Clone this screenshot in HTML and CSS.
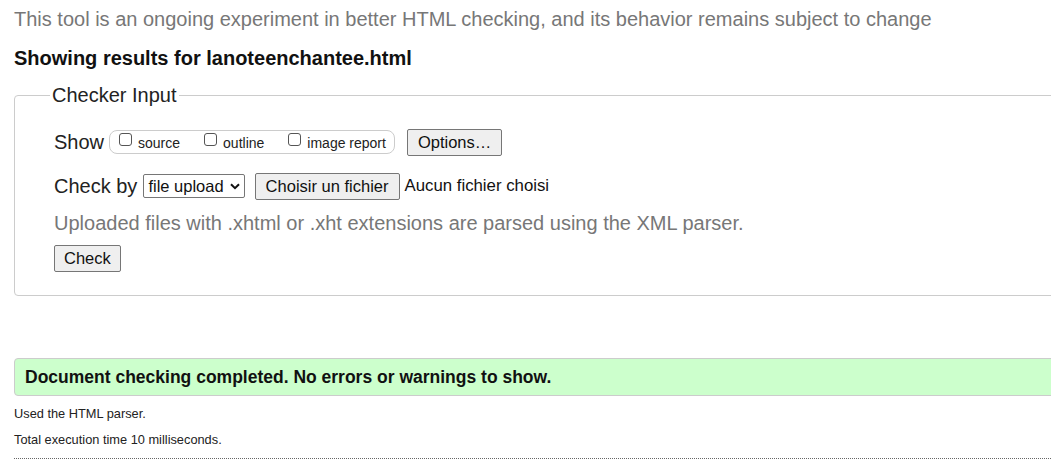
FILE: index.html
```html
<!DOCTYPE html>
<html>
<head>
<meta charset="utf-8">
<link rel="stylesheet" href="styles.css">
</head>
<body>
<p class="intro">This tool is an ongoing experiment in better HTML checking, and its behavior remains subject to change</p>
<h2 class="showing">Showing results for lanoteenchantee.html</h2>
<fieldset class="checker">
  <legend class="legend">Checker Input</legend>
  <div class="row row-show">
    <span class="label">Show</span>
    <span class="show-group">
      <label class="opt"><span class="cb"></span>source</label>
      <label class="opt"><span class="cb"></span>outline</label>
      <label class="opt"><span class="cb"></span>image report</label>
    </span>
    <button class="btn btn-options">Options…</button>
  </div>
  <div class="row row-check">
    <span class="label">Check by</span>
    <span class="select">file upload<svg class="chev" width="10" height="7" viewBox="0 0 10 7"><path d="M1 1.2 L5 5.2 L9 1.2" fill="none" stroke="#111" stroke-width="2"/></svg></span>
    <button class="btn btn-file">Choisir un fichier</button>
    <span class="nofile">Aucun fichier choisi</span>
  </div>
  <p class="hint">Uploaded files with .xhtml or .xht extensions are parsed using the XML parser.</p>
  <button class="btn btn-check">Check</button>
</fieldset>
<div class="success">Document checking completed. No errors or warnings to show.</div>
<p class="meta">Used the HTML parser.</p>
<p class="meta">Total execution time 10 milliseconds.</p>
<div class="dotted"></div>
</body>
</html>
```
FILE: styles.css
```css
html {
  overflow: hidden;
}
body {
  margin: 0;
  padding: 0 0 0 14px;
  font-family: "Liberation Sans", Arial, sans-serif;
  color: #222;
  background: #fff;
}
.intro {
  margin: 8px 0 0;
  font-size: 20px;
  line-height: 22px;
  color: #777;
}
.showing {
  margin: 17px 0 0;
  font-size: 20px;
  line-height: 22px;
  font-weight: bold;
  color: #111;
}
.checker {
  margin: 15px -40px 0 0;
  padding: 22px 0 23px 39px;
  border: 1px solid #ccc;
  border-radius: 4px;
  min-width: 0;
}
.legend {
  margin-left: -4px;
  padding: 0 2px;
  font-size: 20px;
  line-height: 22px;
  color: #222;
}
.row {
  display: flex;
  align-items: center;
}
.label {
  font-size: 20px;
  color: #222;
}
.row-show {
  height: 28px;
}
.show-group {
  display: flex;
  align-items: center;
  margin-left: 5px;
  height: 22px;
  padding: 0 8px 0 9px;
  border: 1px solid #ccc;
  border-radius: 8px;
  gap: 24px;
}
.opt {
  display: flex;
  align-items: center;
  font-size: 14px;
  color: #222;
  padding-top: 2px;
}
.cb {
  width: 11px;
  height: 11px;
  border: 1px solid #555;
  border-radius: 3px;
  margin-right: 6px;
  position: relative;
  top: -4px;
}
.btn {
  font-family: "Liberation Sans", Arial, sans-serif;
  font-size: 16.5px;
  color: #111;
  background: #efefef;
  border: 1px solid #767676;
  border-radius: 2px;
  padding: 0 10px;
  height: 27px;
}
.btn-options {
  margin-left: 12px;
}
.row-check {
  margin-top: 16px;
  height: 28px;
}
.select {
  display: flex;
  align-items: center;
  margin-left: 6px;
  height: 22px;
  padding: 0 4px 0 4px;
  border: 1px solid #767676;
  border-radius: 2px;
  font-size: 16.5px;
  color: #111;
}
.chev {
  margin-left: 6px;
}
.btn-file {
  margin-left: 10px;
}
.nofile {
  margin-left: 5px;
  font-size: 16.8px;
  color: #111;
}
.hint {
  margin: 12px 0 0;
  font-size: 20px;
  line-height: 22px;
  color: #777;
}
.btn-check {
  margin-top: 11px;
  display: block;
  padding: 0 9px;
}
.success {
  margin: 62px -40px 0 0;
  height: 36px;
  display: flex;
  align-items: center;
  padding-left: 10px;
  background: #ccffcc;
  border: 1px solid #ccc;
  border-radius: 4px;
  font-size: 17.5px;
  font-weight: bold;
  color: #111;
}
.meta {
  margin: 9px 0 0;
  font-size: 12.8px;
  line-height: 18px;
  color: #222;
}
.meta + .meta {
  margin-top: 8px;
}
.dotted {
  margin-top: 9px;
  margin-right: -40px;
  border-top: 1px dotted #666;
}
```
